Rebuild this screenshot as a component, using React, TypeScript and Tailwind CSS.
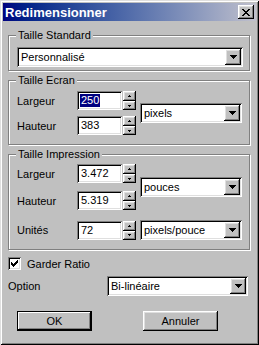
// Boîte "Redimensionner" façon Windows 98
const raised =
  "shadow-[inset_-1px_-1px_#000,inset_1px_1px_#fff,inset_-2px_-2px_#808080,inset_2px_2px_#dfdfdf]";
const sunken =
  "shadow-[inset_1px_1px_#808080,inset_-1px_-1px_#fff,inset_2px_2px_#000,inset_-2px_-2px_#dfdfdf]";
const etched = "border border-[#808080] shadow-[1px_1px_0_#fff,inset_1px_1px_0_#fff]";

function DownArrow() {
  return (
    <svg width="7" height="4" viewBox="0 0 7 4" shapeRendering="crispEdges" aria-hidden="true">
      <rect x="0" y="0" width="7" height="1" fill="#000" />
      <rect x="1" y="1" width="5" height="1" fill="#000" />
      <rect x="2" y="2" width="3" height="1" fill="#000" />
      <rect x="3" y="3" width="1" height="1" fill="#000" />
    </svg>
  );
}

function Combo({ text, w }: { text: string; w: string }) {
  return (
    <div className={`${w} h-[20px] bg-white ${sunken} flex items-center`}>
      <span className="flex-1 pl-[4px] leading-[12px] text-black">{text}</span>
      <div className={`w-[16px] h-[16px] mr-[2px] bg-[#c0c0c0] ${raised} flex items-center justify-center`}>
        <DownArrow />
      </div>
    </div>
  );
}

function Spin() {
  return (
    <div className="w-[13px] h-[19px] ml-[1px] flex flex-col">
      <div className={`h-[10px] bg-[#c0c0c0] ${raised} flex items-center justify-center`}>
        <svg width="3" height="2" viewBox="0 0 3 2" shapeRendering="crispEdges" aria-hidden="true">
          <rect x="1" y="0" width="1" height="1" fill="#000" />
          <rect x="0" y="1" width="3" height="1" fill="#000" />
        </svg>
      </div>
      <div className={`h-[9px] bg-[#c0c0c0] ${raised} flex items-center justify-center`}>
        <svg width="3" height="2" viewBox="0 0 3 2" shapeRendering="crispEdges" aria-hidden="true">
          <rect x="0" y="0" width="3" height="1" fill="#000" />
          <rect x="1" y="1" width="1" height="1" fill="#000" />
        </svg>
      </div>
    </div>
  );
}

function Field({ label, value, selected }: { label: string; value: string; selected?: boolean }) {
  return (
    <div className="flex items-center h-[19px]">
      <span className="w-[60px] leading-[12px]">{label}</span>
      <div className={`w-[45px] h-[19px] bg-white ${sunken} flex items-center pl-[3px]`}>
        {selected ? (
          <span className="bg-[#000080] text-white leading-[13px] px-[1px]">{value}</span>
        ) : (
          <span className="leading-[13px] pl-[1px]">{value}</span>
        )}
      </div>
      <Spin />
    </div>
  );
}

function Group({ title, children, className }: { title: string; children: React.ReactNode; className: string }) {
  return (
    <fieldset className={`w-[242px] ml-[5px] ${etched} ${className}`}>
      <legend className="ml-[-1px] px-[2px] bg-[#c0c0c0] leading-[12px]">{title}</legend>
      {children}
    </fieldset>
  );
}

export default function App() {
  return (
    <div
      className={`w-[259px] h-[345px] bg-[#c0c0c0] p-[3px] flex flex-col text-[11px] text-black font-['Liberation_Sans',Arial,sans-serif] shadow-[inset_1px_1px_#dfdfdf,inset_-1px_-1px_#000,inset_2px_2px_#fff,inset_-2px_-2px_#808080]`}
    >
      {/* Barre de titre */}
      <div className="h-[18px] flex items-center justify-between pl-[2px] pr-[2px] bg-gradient-to-r from-[#000080] to-[#c0c0cc]">
        <span className="text-white font-bold text-[13px] leading-none">Redimensionner</span>
        <div className={`w-[16px] h-[14px] bg-[#c0c0c0] ${raised} flex items-center justify-center`}>
          <svg width="8" height="7" viewBox="0 0 8 7" shapeRendering="crispEdges" aria-hidden="true">
            <path
              fill="#000"
              d="M0 0h2v1H0zM6 0h2v1H6zM1 1h2v1H1zM5 1h2v1H5zM2 2h4v1H2zM3 3h2v1H3zM2 4h4v1H2zM1 5h2v1H1zM5 5h2v1H5zM0 6h2v1H0zM6 6h2v1H6z"
            />
          </svg>
        </div>
      </div>

      <Group title="Taille Standard" className="mt-[8px] pt-[6px] pb-[3px] pl-[8px]">
        <Combo text="Personnalisé" w="w-[226px]" />
      </Group>

      <Group title="Taille Ecran" className="mt-[3px] pt-[5px] pb-[9px] pl-[8px]">
        <div className="flex items-center">
          <div className="flex flex-col gap-[6px]">
            <Field label="Largeur" value="250" selected />
            <Field label="Hauteur" value="383" />
          </div>
          <div className="ml-[4px]">
            <Combo text="pixels" w="w-[102px]" />
          </div>
        </div>
      </Group>

      <Group title="Taille Impression" className="mt-[3px] pt-[4px] pb-[9px] pl-[8px]">
        <div className="flex items-center">
          <div className="flex flex-col gap-[8px]">
            <Field label="Largeur" value="3.472" />
            <Field label="Hauteur" value="5.319" />
          </div>
          <div className="ml-[4px]">
            <Combo text="pouces" w="w-[102px]" />
          </div>
        </div>
        <div className="flex items-center mt-[10px]">
          <Field label="Unités" value="72" />
          <div className="ml-[4px]">
            <Combo text="pixels/pouce" w="w-[102px]" />
          </div>
        </div>
      </Group>

      {/* Garder ratio */}
      <div className="flex items-center mt-[7px] ml-[5px]">
        <div className={`w-[13px] h-[13px] bg-white ${sunken} flex items-center justify-center`}>
          <svg width="7" height="7" viewBox="0 0 7 7" shapeRendering="crispEdges" aria-hidden="true">
            <path
              fill="#000"
              d="M6 0h1v1H6zM5 1h2v1H5zM0 2h1v1H0zM4 2h3v1H4zM0 3h2v1H0zM3 3h3v1H3zM0 4h5v1H0zM1 5h3v1H1zM2 6h1v1H2z"
            />
          </svg>
        </div>
        <span className="ml-[6px] leading-[12px]">Garder Ratio</span>
      </div>

      <div className="flex items-center mt-[6px] ml-[5px]">
        <span className="w-[99px] leading-[12px]">Option</span>
        <Combo text="Bi-linéaire" w="w-[141px]" />
      </div>

      <div className="flex mt-[15px] ml-[14px]">
        <button className="w-[75px] h-[20px] border border-black bg-[#c0c0c0] shadow-[inset_-1px_-1px_#000,inset_1px_1px_#fff,inset_-2px_-2px_#808080] leading-[12px]">
          OK
        </button>
        <button className={`ml-[51px] w-[75px] h-[20px] bg-[#c0c0c0] ${raised} leading-[12px]`}>
          Annuler
        </button>
      </div>
    </div>
  );
}
